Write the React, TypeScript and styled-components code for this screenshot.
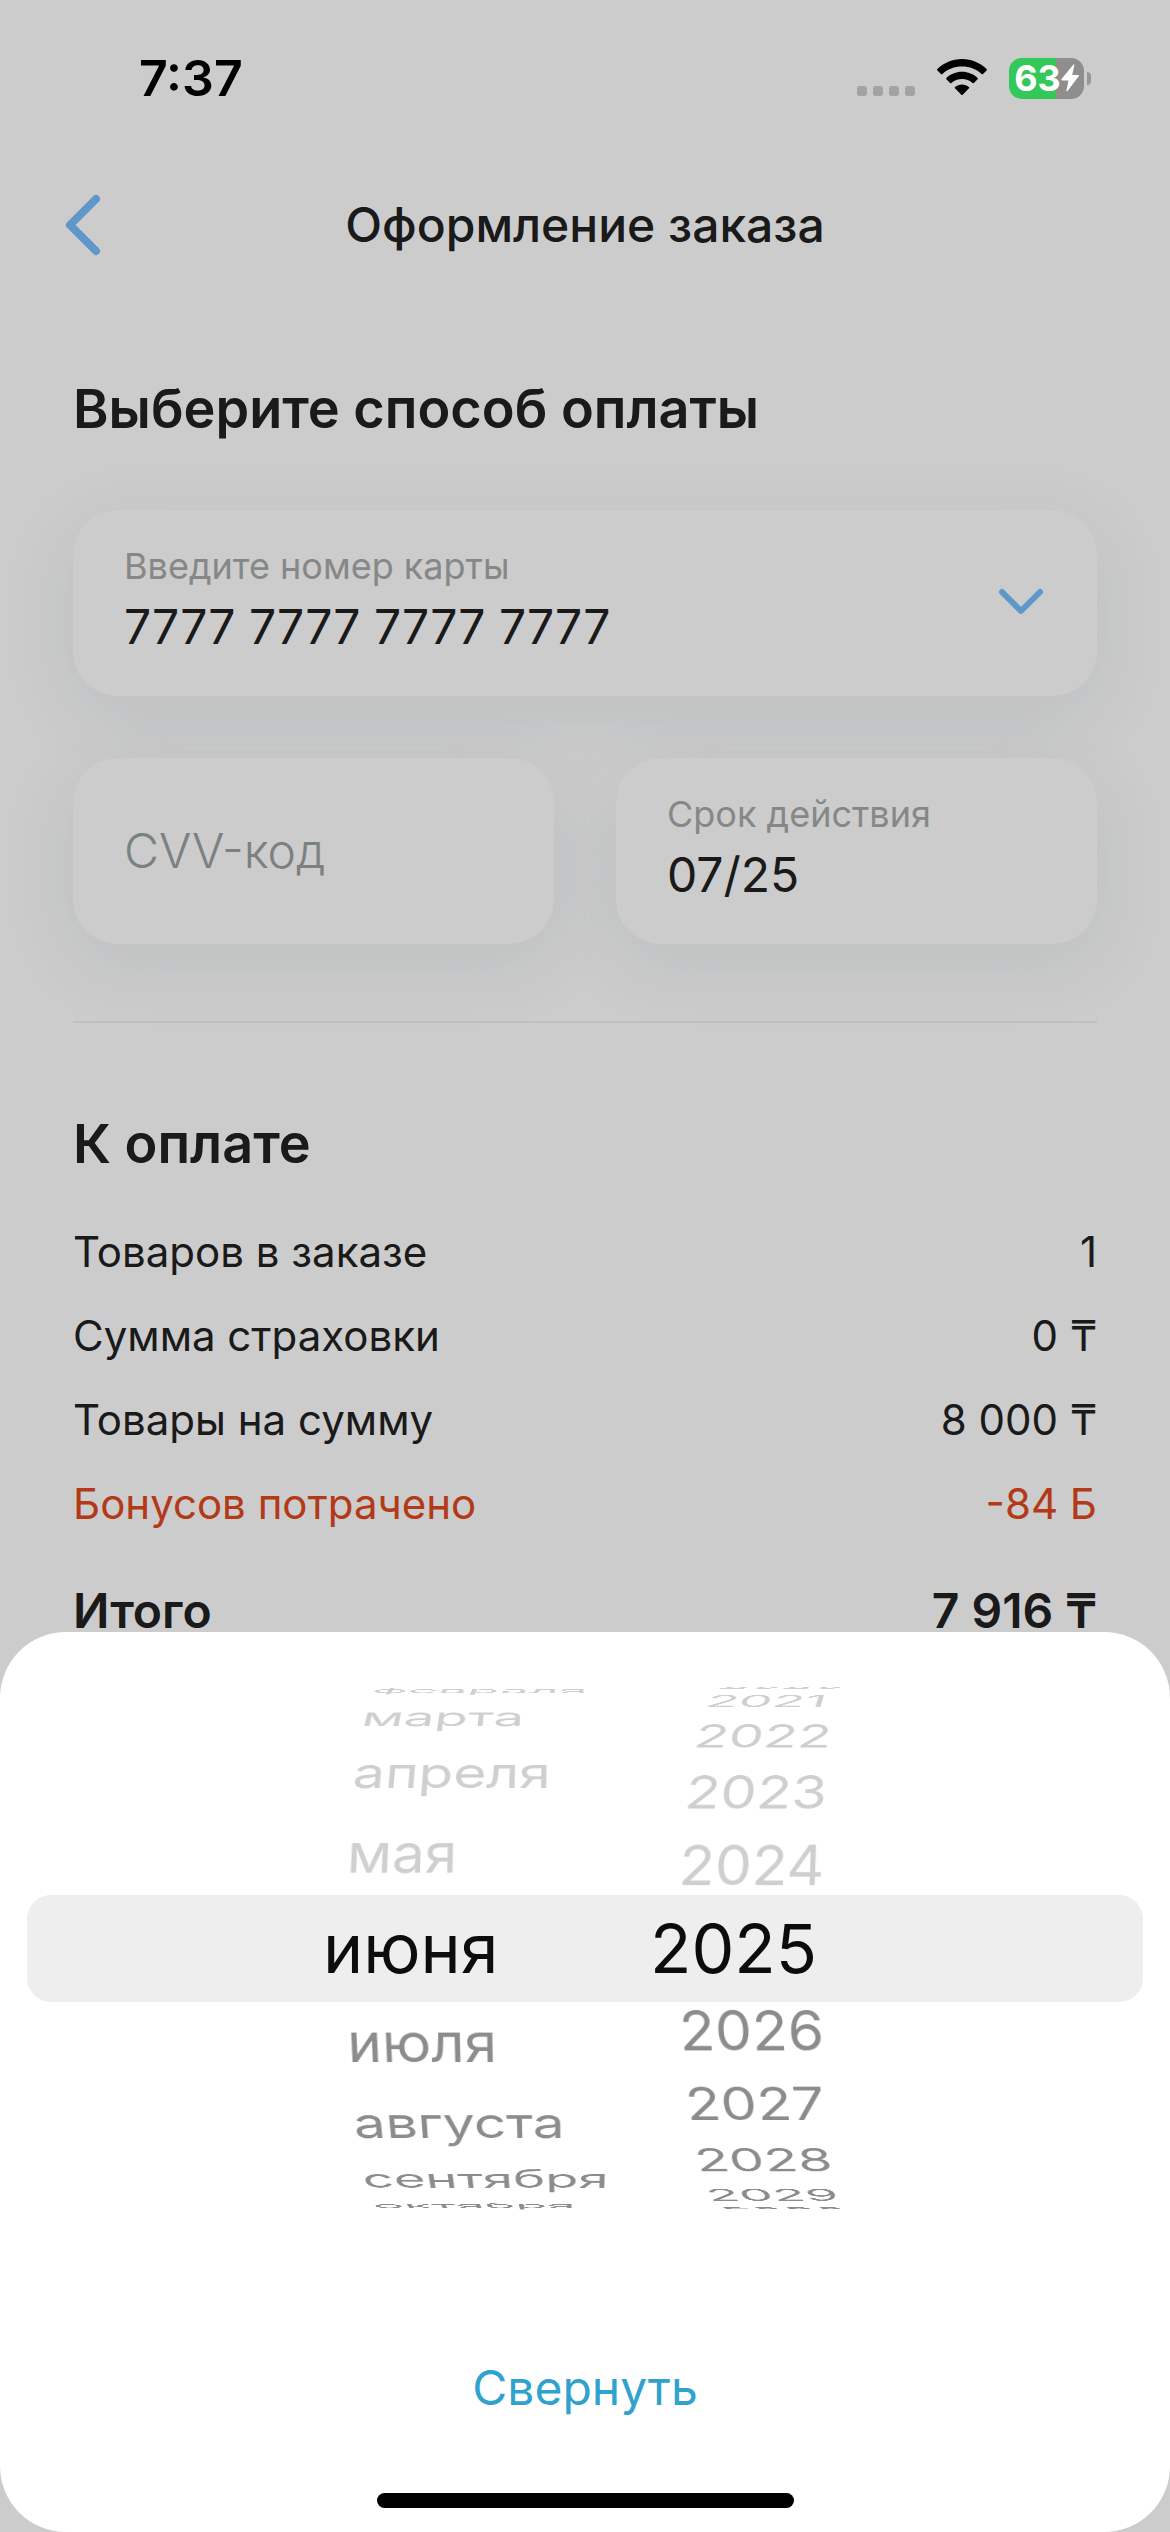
import React, { useState } from "react";
import styled, { createGlobalStyle } from "styled-components";

const GlobalStyle = createGlobalStyle`
  *, *::before, *::after { box-sizing: border-box; }
  body { margin: 0; background: #fff; }
  button, input { font: inherit; color: inherit; border: 0; padding: 0; background: none; }
`;

const Screen = styled.div`
  position: relative;
  min-height: 100vh;
  overflow: hidden;
  background: #fff;
  color: #212121;
  font-family: Inter, "Liberation Sans", sans-serif;
`;

const StatusBar = styled.div`
  position: relative;
  z-index: 2;
  display: flex;
  align-items: center;
  justify-content: space-between;
  height: 156px;
  padding: 0 79px 0 139px;
  color: #000;
`;

const Clock = styled.time`
  font-size: 50px;
  line-height: 60px;
  font-weight: 600;
`;

const StatusIcons = styled.div`
  display: flex;
  align-items: center;
  gap: 22px;
`;

const SignalDots = styled.div`
  display: flex;
  gap: 6px;
  padding-top: 26px;
`;

const Dot = styled.span`
  width: 10px;
  height: 10px;
  border-radius: 3px;
  background: #a3a3a3;
`;

const BatteryGroup = styled.div`
  display: flex;
  align-items: center;
  gap: 3px;
`;

const Battery = styled.div<{ $level: number }>`
  display: flex;
  align-items: center;
  justify-content: center;
  width: 75px;
  height: 41px;
  border-radius: 13px;
  background: linear-gradient(
    to right,
    #34c759 ${(p) => p.$level}%,
    #8e8e8e ${(p) => p.$level}%
  );
  color: #fff;
  font-size: 36px;
  line-height: 41px;
  font-weight: 700;
`;

const BatteryTip = styled.span`
  width: 4px;
  height: 13px;
  border-radius: 0 4px 4px 0;
  background: #979797;
`;

const NavBar = styled.header`
  display: grid;
  grid-template-columns: 120px 1fr 120px;
  align-items: center;
  height: 138px;
`;

const BackButton = styled.button`
  display: flex;
  padding-left: 64px;
`;

const NavTitle = styled.h1`
  margin: 0;
  text-align: center;
  font-size: 48px;
  line-height: 60px;
  font-weight: 500;
`;

const Content = styled.main`
  padding: 82px 73px 0;
`;

const SectionTitle = styled.h2`
  margin: 0;
  font-size: 54px;
  line-height: 66px;
  font-weight: 600;
`;

const Fields = styled.div`
  display: grid;
  grid-template-columns: 1fr 1fr;
  gap: 62px;
  margin-top: 68px;
`;

const Card = styled.div<{ $wide?: boolean }>`
  display: flex;
  align-items: center;
  justify-content: space-between;
  grid-column: ${(p) => (p.$wide ? "1 / -1" : "auto")};
  height: 186px;
  padding: 0 52px 2px 51px;
  border-radius: 45px;
  background: #fff;
  box-shadow: 0 18px 75px rgba(60, 90, 110, 0.1);
`;

const Field = styled.label`
  display: flex;
  flex: 1;
  flex-direction: column;
  min-width: 0;
`;

const FieldLabel = styled.span`
  font-size: 36px;
  line-height: 48px;
  color: #a8aaab;
`;

const FieldInput = styled.input`
  width: 100%;
  height: 72px;
  font-size: 48px;
  line-height: 60px;
  outline: none;

  &::placeholder {
    color: #9aa1a2;
    font-weight: 300;
    opacity: 1;
  }
`;

const ExpandButton = styled.button`
  display: flex;
`;

const Summary = styled.section`
  margin-top: 77px;
  padding-top: 88px;
  border-top: 2px solid #f1f1f1;
`;

const Totals = styled.dl`
  margin: 33px 0 0;
`;

const TotalRow = styled.div<{ $accent?: boolean; $grand?: boolean }>`
  display: flex;
  justify-content: space-between;
  margin-top: ${(p) => (p.$grand ? "23px" : "0")};
  color: ${(p) => (p.$accent ? "#e14820" : "inherit")};
  font-size: ${(p) => (p.$grand ? "48px" : "42px")};
  font-weight: ${(p) => (p.$grand ? 600 : 400)};
  line-height: 84px;

  dd { margin: 0; }
`;

const Backdrop = styled.div`
  position: absolute;
  inset: 0;
  z-index: 1;
  background: rgba(0, 0, 0, 0.2);
`;

const Sheet = styled.section`
  position: fixed;
  inset: auto 0 0;
  z-index: 3;
  display: flex;
  flex-direction: column;
  align-items: center;
  padding: 54px 27px 24px;
  border-radius: 66px;
  background: #fff;
`;

const Picker = styled.div`
  display: grid;
  align-self: stretch;
  align-items: center;
  height: 524px;

  > * { grid-area: 1 / 1; }
`;

const SelectionBand = styled.div`
  height: 107px;
  border-radius: 24px;
  background: #eee;
`;

const Wheels = styled.div`
  display: flex;
  justify-content: center;
  height: 100%;
`;

const Wheel = styled.div<{ $vanish: number; $width: number }>`
  display: grid;
  align-items: center;
  width: ${(p) => p.$width}px;
  height: 524px;
  perspective: 1535px;
  perspective-origin: ${(p) => p.$vanish}px 50%;
`;

const WheelItem = styled.button<{ $state: "past" | "current" | "next"; $indent: number }>`
  grid-area: 1 / 1;
  height: 84px;
  padding-left: ${(p) => (p.$state === "current" ? 0 : p.$indent)}px;
  text-align: left;
  white-space: nowrap;
  font-size: ${(p) => (p.$state === "current" ? "68px" : "59px")};
  line-height: 84px;
  color: ${(p) =>
    p.$state === "current" ? "#0c0c0c" : p.$state === "past" ? "#cfcfcf" : "#8c8c8c"};
  backface-visibility: hidden;
`;

const CollapseButton = styled.button`
  margin-top: 148px;
  color: #2fa3cd;
  font-size: 48px;
  line-height: 60px;
`;

const HomeIndicator = styled.div`
  width: 417px;
  height: 15px;
  margin-top: 75px;
  border-radius: 8px;
  background: #000;
`;

const MONTHS = [
  "января", "февраля", "марта", "апреля", "мая", "июня",
  "июля", "августа", "сентября", "октября", "ноября", "декабря",
];
const YEARS = Array.from({ length: 21 }, (_, i) => String(2015 + i));
const DRUM_RADIUS = 308;

interface DrumProps {
  label: string;
  items: string[];
  initial: string;
  step: number;
  vanish: number;
  width: number;
  indent: number;
}

function Drum({ label, items, initial, step, vanish, width, indent }: DrumProps) {
  const [selected, setSelected] = useState(items.indexOf(initial));
  return (
    <Wheel role="listbox" aria-label={label} $vanish={vanish} $width={width}>
      {items.map((item, i) => {
        const offset = i - selected;
        const angle = -offset * step;
        if (Math.abs(angle) > 82) return null;
        return (
          <WheelItem
            key={item}
            type="button"
            role="option"
            aria-selected={offset === 0}
            $state={offset === 0 ? "current" : offset < 0 ? "past" : "next"}
            $indent={indent}
            onClick={() => setSelected(i)}
            style={{
              transform: `translateZ(${-DRUM_RADIUS}px) rotateX(${angle}deg) translateZ(${DRUM_RADIUS}px)`,
            }}
          >
            {item}
          </WheelItem>
        );
      })}
    </Wheel>
  );
}

const TOTALS = [
  { name: "Товаров в заказе", value: "1" },
  { name: "Сумма страховки", value: "0 ₸" },
  { name: "Товары на сумму", value: "8 000 ₸" },
  { name: "Бонусов потрачено", value: "-84 Б", accent: true },
  { name: "Итого", value: "7 916 ₸", grand: true },
];

export default function App() {
  const [card, setCard] = useState("7777 7777 7777 7777");
  const [cvv, setCvv] = useState("");

  return (
    <Screen>
      <GlobalStyle />
      <StatusBar>
        <Clock>7:37</Clock>
        <StatusIcons>
          <SignalDots>
            <Dot />
            <Dot />
            <Dot />
            <Dot />
          </SignalDots>
          <svg width="50" height="38" viewBox="0 0 50 38" aria-hidden="true">
            <path d="M25 0C15.400 0 6.700 3.800 0.400 10.100Q-0.200 10.800 0.400 11.500L4 15.100Q4.700 15.800 5.400 15.100C10.500 10.100 17.400 7.600 25 7.600S39.500 10.100 44.600 15.100Q45.300 15.800 46 15.100L49.600 11.500Q50.200 10.800 49.600 10.100C43.300 3.800 34.600 0 25 0Z" />
            <path d="M25 12.800C19 12.800 13.500 15.100 9.400 18.900Q8.700 19.600 9.400 20.300L13.100 24Q13.700 24.600 14.400 24C17.200 21.500 20.900 20.100 25 20.100S32.800 21.500 35.600 24Q36.300 24.600 36.900 24L40.600 20.300Q41.300 19.600 40.600 18.900C36.500 15.100 31 12.800 25 12.800Z" />
            <path d="M25 25.500C22.400 25.500 20 26.400 18.100 27.900Q17.300 28.600 18 29.300L24.300 35.700Q25 36.400 25.700 35.700L32 29.300Q32.700 28.600 31.900 27.900C30 26.400 27.600 25.500 25 25.500Z" />
          </svg>
          <BatteryGroup>
            <Battery $level={63}>
              63
              <svg width="18" height="28" viewBox="0 0 18 28" aria-hidden="true">
                <path
                  d="M12.500 0.500Q13.600 0 13.300 1.500L11.200 11H17Q18.500 11.200 17.500 12.600L6.500 27Q5.200 28 5.500 26.300L7.500 16.500H1.200Q-0.300 16.200 0.700 14.800Z"
                  fill="#fff"
                />
              </svg>
            </Battery>
            <BatteryTip />
          </BatteryGroup>
        </StatusIcons>
      </StatusBar>

      <NavBar>
        <BackButton type="button" aria-label="Назад">
          <svg width="38" height="62" viewBox="0 0 38 62" fill="none" aria-hidden="true">
            <path
              d="M32 5L6 31L32 57"
              stroke="#77bdfe"
              strokeWidth="8"
              strokeLinecap="round"
              strokeLinejoin="round"
            />
          </svg>
        </BackButton>
        <NavTitle>Оформление заказа</NavTitle>
      </NavBar>

      <Content>
        <SectionTitle>Выберите способ оплаты</SectionTitle>
        <Fields>
          <Card $wide>
            <Field>
              <FieldLabel>Введите номер карты</FieldLabel>
              <FieldInput
                inputMode="numeric"
                value={card}
                onChange={(e) => setCard(e.target.value)}
              />
            </Field>
            <ExpandButton type="button" aria-label="Выбрать карту">
              <svg width="48" height="30" viewBox="0 0 48 30" fill="none" aria-hidden="true">
                <path
                  d="M5 5L24 24L43 5"
                  stroke="#77bdfe"
                  strokeWidth="6"
                  strokeLinecap="round"
                  strokeLinejoin="round"
                />
              </svg>
            </ExpandButton>
          </Card>
          <Card>
            <FieldInput
              aria-label="CVV-код"
              placeholder="CVV-код"
              inputMode="numeric"
              value={cvv}
              onChange={(e) => setCvv(e.target.value)}
            />
          </Card>
          <Card>
            <Field>
              <FieldLabel>Срок действия</FieldLabel>
              <FieldInput readOnly value="07/25" />
            </Field>
          </Card>
        </Fields>

        <Summary>
          <SectionTitle>К оплате</SectionTitle>
          <Totals>
            {TOTALS.map((row) => (
              <TotalRow key={row.name} $accent={row.accent} $grand={row.grand}>
                <dt>{row.name}</dt>
                <dd>{row.value}</dd>
              </TotalRow>
            ))}
          </Totals>
        </Summary>
      </Content>

      <Backdrop />

      <Sheet role="dialog" aria-label="Срок действия">
        <Picker>
          <SelectionBand />
          <Wheels>
            <Drum label="Месяц" items={MONTHS} initial="июня" step={18.1} vanish={247} width={327} indent={22} />
            <Drum label="Год" items={YEARS} initial="2025" step={15.7} vanish={329} width={197} indent={27} />
          </Wheels>
        </Picker>
        <CollapseButton type="button">Свернуть</CollapseButton>
        <HomeIndicator />
      </Sheet>
    </Screen>
  );
}
